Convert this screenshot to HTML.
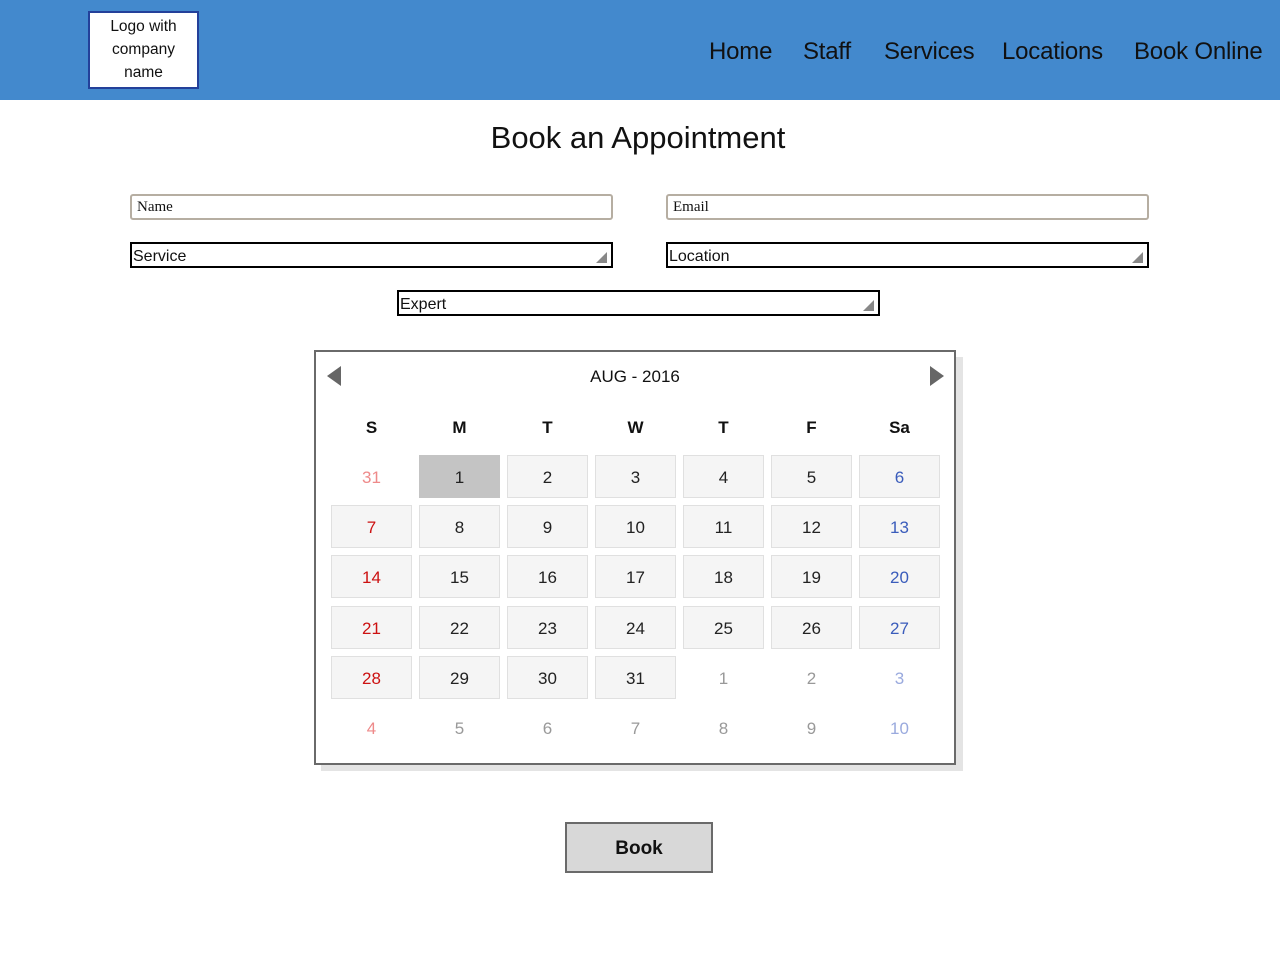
<!DOCTYPE html>
<html><head><meta charset="utf-8"><style>
*{margin:0;padding:0;box-sizing:border-box}
body{width:1280px;height:960px;background:#fff;font-family:"Liberation Sans",sans-serif;position:relative;overflow:hidden}
.a{position:absolute}
.hdr{left:0;top:0;width:1280px;height:100px;background:#4389cd}
.logo{left:88px;top:11px;width:111px;height:78px;background:#fff;border:2px solid #23409a;text-align:center;font-size:15.5px;line-height:23px;color:#111;padding-top:2px}
.nav{top:38px;font-size:24px;color:#111;white-space:nowrap;letter-spacing:-0.2px}
.in{height:26px;border:2px solid #b6aea2;border-radius:3px;font-family:"Liberation Serif",serif;font-size:15px;padding-left:5px;line-height:23px;color:#111}
.sel{height:26px;border:2px solid #000;font-size:16px;line-height:25px;color:#111;padding-left:1px}
.sel:after{content:"";position:absolute;right:4px;bottom:3px;border-left:11px solid transparent;border-bottom:11px solid #888}
.c{width:81px;height:43px;text-align:center;line-height:45px;font-size:17px;color:#222}
.b{background:#f5f5f5;border:1px solid #e0e0e0;line-height:43px}
.h{font-weight:bold;font-size:17px;color:#111;width:81px;text-align:center}
</style></head><body>
<div class="a hdr"></div>
<div class="a logo">Logo with<br>company<br>name</div>
<div class="a nav" style="left:709px">Home</div>
<div class="a nav" style="left:803px">Staff</div>
<div class="a nav" style="left:884px">Services</div>
<div class="a nav" style="left:1002px">Locations</div>
<div class="a nav" style="left:1134px">Book Online</div>
<div class="a" style="left:0;width:1276px;top:120px;text-align:center;font-size:31px;color:#111">Book an Appointment</div>
<div class="a in" style="left:130px;top:194px;width:483px">Name</div>
<div class="a in" style="left:666px;top:194px;width:483px">Email</div>
<div class="a sel" style="left:130px;top:242px;width:483px">Service</div>
<div class="a sel" style="left:666px;top:242px;width:483px">Location</div>
<div class="a sel" style="left:397px;top:290px;width:483px">Expert</div>
<div class="a" style="left:321px;top:357px;width:642px;height:414px;background:#e4e4e4"></div>
<div class="a" style="left:314px;top:350px;width:642px;height:415px;background:#fff;border:2px solid #6a6a6a"></div>
<div class="a" style="left:327px;top:366px;border-top:10px solid transparent;border-bottom:10px solid transparent;border-right:14px solid #666"></div>
<div class="a" style="left:930px;top:366px;border-top:10px solid transparent;border-bottom:10px solid transparent;border-left:14px solid #666"></div>
<div class="a" style="left:316px;width:638px;top:367px;text-align:center;font-size:17px;color:#111">AUG - 2016</div>
<div class="a h" style="left:331px;top:418px">S</div>
<div class="a h" style="left:419px;top:418px">M</div>
<div class="a h" style="left:507px;top:418px">T</div>
<div class="a h" style="left:595px;top:418px">W</div>
<div class="a h" style="left:683px;top:418px">T</div>
<div class="a h" style="left:771px;top:418px">F</div>
<div class="a h" style="left:859px;top:418px">Sa</div>
<div id="cal"></div>
<script>
var xs=[331,419,507,595,683,771,859],ys=[455,505,555,606,656,706];
var d=[[31,1,2,3,4,5,6],[7,8,9,10,11,12,13],[14,15,16,17,18,19,20],[21,22,23,24,25,26,27],[28,29,30,31,1,2,3],[4,5,6,7,8,9,10]];
var h='';
for(var r=0;r<6;r++)for(var c=0;c<7;c++){
var other=(r==0&&c==0)||(r==4&&c>3)||r==5;
var col=other?(c==0?'#ee8a8a':c==6?'#9aaade':'#999'):(c==0?'#cc1111':c==6?'#3a5cbb':'#222');
var cls='a c'+(other?'':' b');var st='left:'+xs[c]+'px;top:'+ys[r]+'px;color:'+col;
if(r==0&&c==1)st+=';background:#c4c4c4;border-color:#c4c4c4';
h+='<div class="'+cls+'" style="'+st+'">'+d[r][c]+'</div>';}
document.getElementById('cal').innerHTML=h;
</script>
<div class="a" style="left:565px;top:822px;width:148px;height:51px;background:#d8d8d8;border:2px solid #6a6a6a;text-align:center;line-height:49px;font-weight:bold;font-size:19px;color:#111">Book</div>
</body></html>
